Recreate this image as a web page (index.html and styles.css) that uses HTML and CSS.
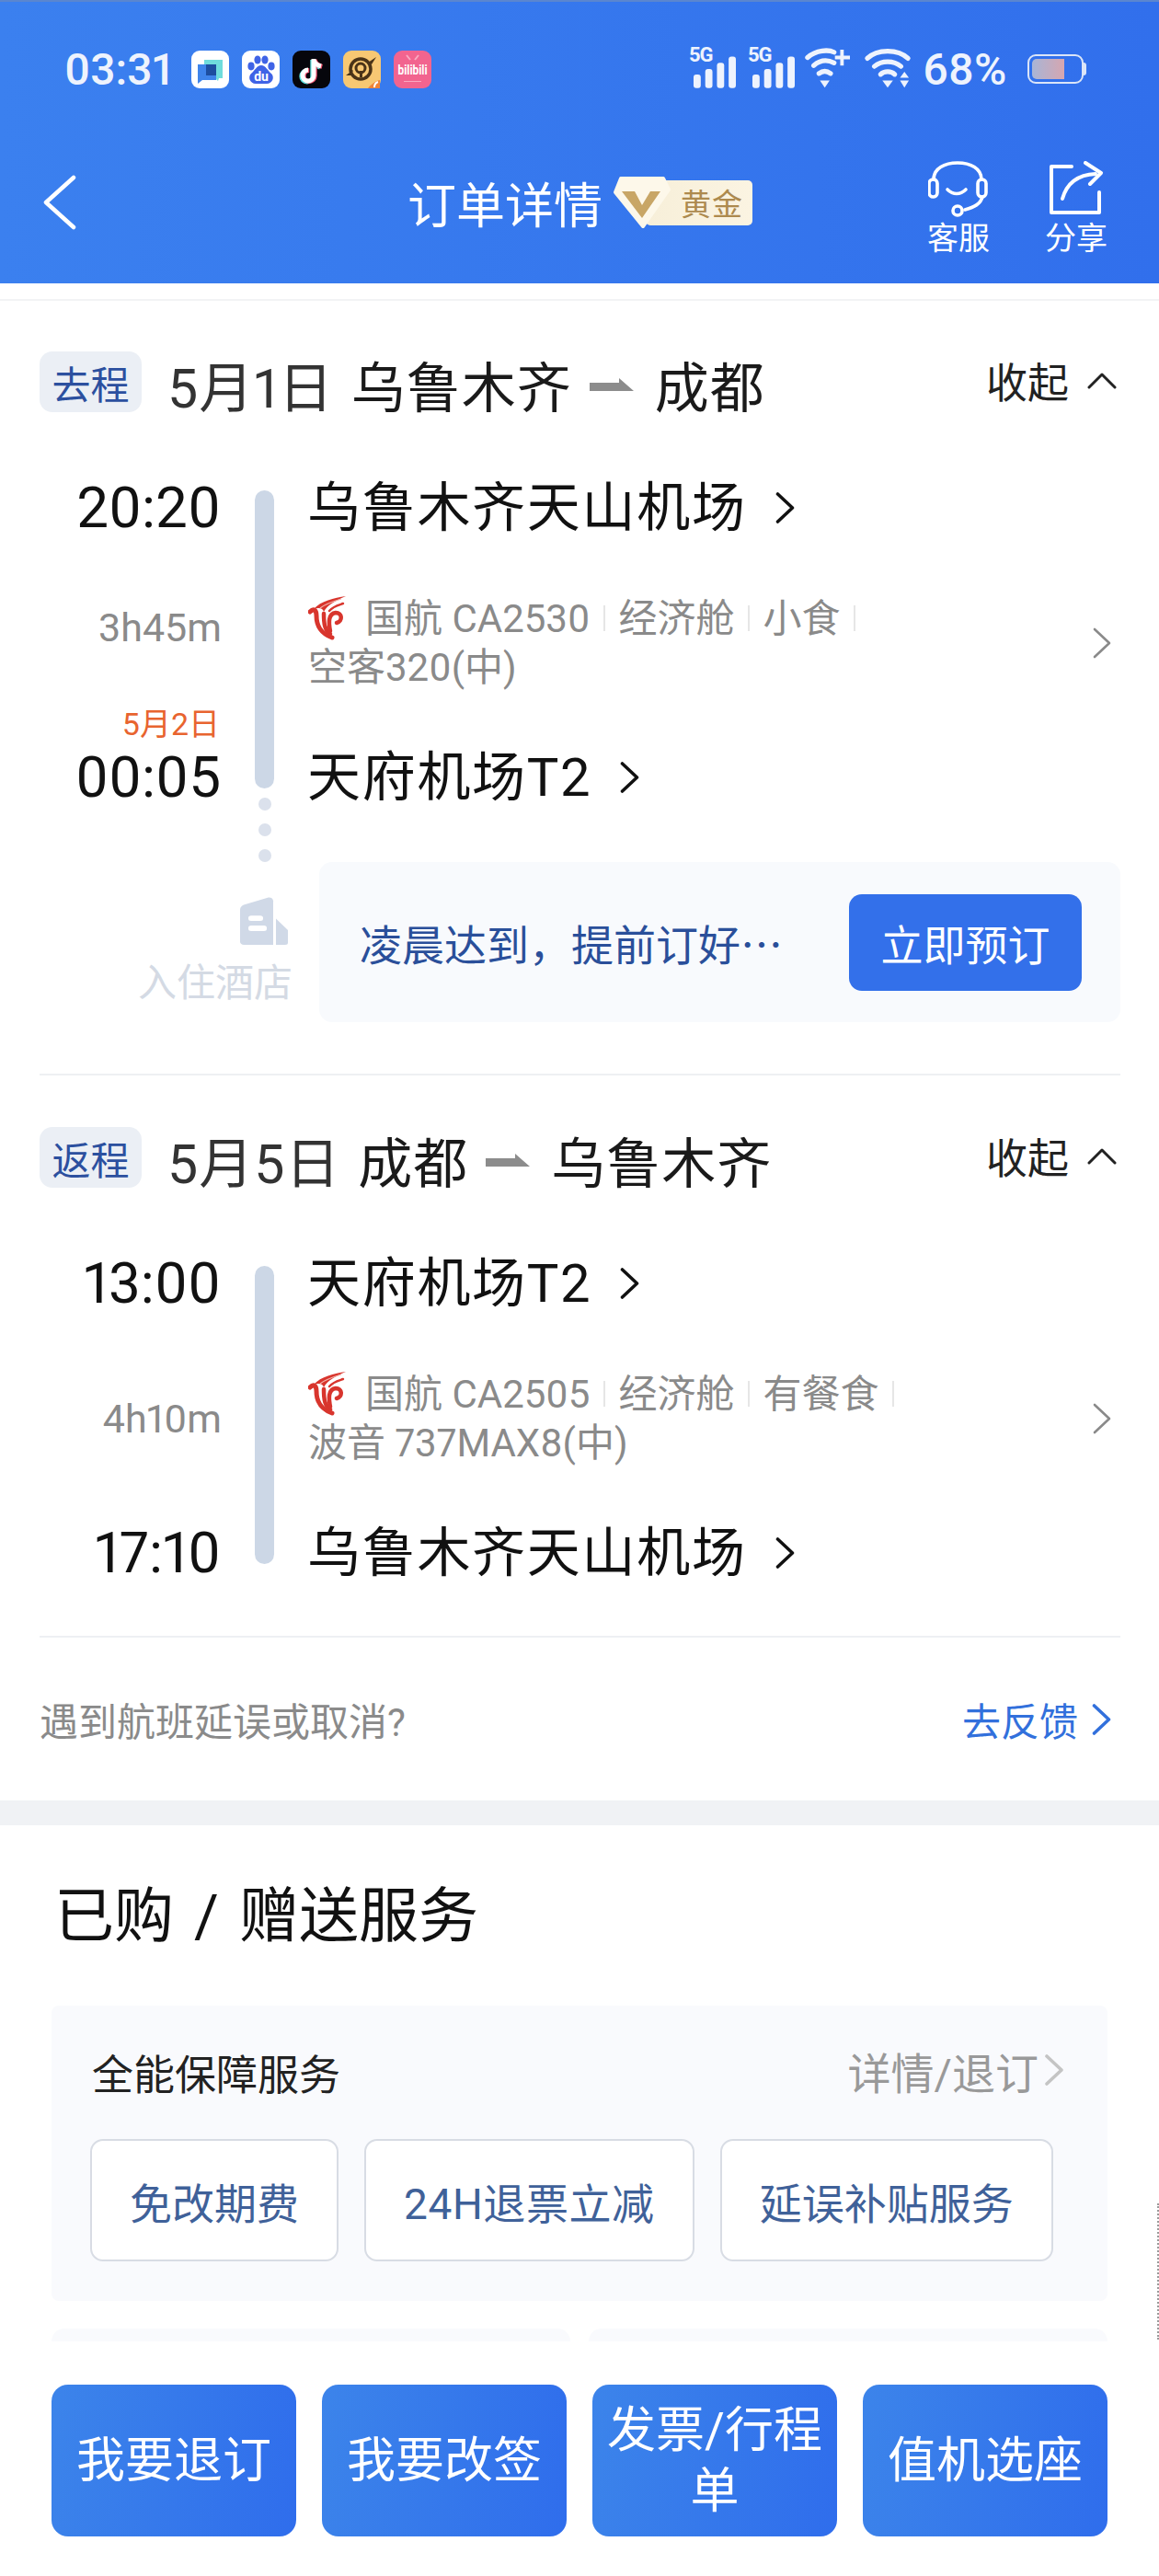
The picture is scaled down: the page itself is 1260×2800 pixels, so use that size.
FILE: index.html
```html
<!doctype html>
<html lang="zh-CN">

<head>
  <meta charset="UTF-8" />
  <meta name="viewport" content="width=device-width, initial-scale=1.0" />
  <title>订单详情</title>
  <link rel="stylesheet" href="styles.css">
</head>

<body>
  <svg class="defs" aria-hidden="true">
    <symbol id="chev" viewBox="0 0 20 34">
      <polyline points="2,2 18,17 2,32" fill="none" stroke="currentColor" stroke-width="3.6" stroke-linecap="round" stroke-linejoin="round" />
    </symbol>
    <symbol id="chev-thin" viewBox="0 0 20 34">
      <polyline points="2,2 18,17 2,32" fill="none" stroke="currentColor" stroke-width="2.6" stroke-linecap="round" stroke-linejoin="round" />
    </symbol>
    <symbol id="chev-up" viewBox="0 0 32 18">
      <polyline points="2,16 16,2 30,16" fill="none" stroke="currentColor" stroke-width="3" stroke-linecap="round" stroke-linejoin="round" />
    </symbol>
    <symbol id="air-china" viewBox="0 0 42 48">
      <path d="M41 0C28 2 14 5 6 14c6-2 10-1 11 3C21 9 30 5 41 0z" fill="#d8352d" />
      <path d="M36 3C26 6 18 9 13 13" fill="none" stroke="#f3b3aa" stroke-width="1.2" />
      <g fill="none" stroke="#d8352d" stroke-linecap="round">
        <path d="M2 17c4-4 7-2 7 4 0 11 4 19 17 24" stroke-width="5" />
        <path d="M17 19c0 11 1 18 7 22" stroke-width="4.500" />
        <path d="M24 38c-2-10-2-19 6-20 7 0 8 9 1 11" stroke-width="4.500" />
        <path d="M23 16c4-5 9-6 15-8" stroke-width="2.400" />
      </g>
    </symbol>
    <symbol id="route-arrow" viewBox="0 0 48 14">
      <polygon points="0,5 32,5 32,0 48,14 0,14" fill="#8c8c8c" />
    </symbol>
    <symbol id="signal" viewBox="0 0 48 36">
      <g fill="#eef3fd">
        <rect x="1" y="20" width="8" height="15" rx="3" />
        <rect x="14" y="14" width="8" height="21" rx="3" />
        <rect x="27" y="7" width="8" height="28" rx="3" />
        <rect x="40" y="0" width="8" height="35" rx="3" />
      </g>
    </symbol>
  </svg>

  <header class="top">
    <div class="status-bar">
      <span class="clock">03:31</span>
      <div class="app-icons">
        <svg class="app-icon" viewBox="0 0 41 41">
          <rect width="41" height="41" rx="9" fill="#fff" />
          <path d="M14 10h20v20h-4l-1 3-3-3H14z" fill="#6fdcdc" />
          <path d="M7 15h20v17H12l-5 4z" fill="#3f84ea" />
          <rect x="16" y="15" width="11" height="12" fill="#1d4e9f" />
        </svg>
        <svg class="app-icon" viewBox="0 0 41 41">
          <rect width="41" height="41" rx="9" fill="#fff" />
          <g fill="#3f63e6">
            <ellipse cx="10" cy="17" rx="3.6" ry="4.4" />
            <ellipse cx="17" cy="10" rx="3.6" ry="4.6" />
            <ellipse cx="25" cy="10" rx="3.6" ry="4.6" />
            <ellipse cx="32" cy="17" rx="3.6" ry="4.4" />
            <path d="M21 16c5 0 7 6 11 9 4 4 1 11-5 11H15c-6 0-9-7-5-11 4-3 6-9 11-9z" />
          </g>
          <text class="du" x="21" y="33">du</text>
        </svg>
        <svg class="app-icon" viewBox="0 0 41 41">
          <rect width="41" height="41" rx="9" fill="#06060c" />
          <g fill="none" stroke-width="5">
            <path d="M23 9v18a6 6 0 1 1-6-6M23 10c1 4 4 6 8 7" stroke="#5fe3e0" transform="translate(-1.2 1)" />
            <path d="M23 9v18a6 6 0 1 1-6-6M23 10c1 4 4 6 8 7" stroke="#f0506e" transform="translate(1.2 .4)" />
            <path d="M23 9v18a6 6 0 1 1-6-6M23 10c1 4 4 6 8 7" stroke="#fff" />
          </g>
        </svg>
        <svg class="app-icon" viewBox="0 0 41 41">
          <rect width="41" height="41" rx="9" fill="#f7c873" />
          <circle cx="19" cy="20" r="11" fill="none" stroke="#4a3418" stroke-width="3.5" />
          <circle cx="19" cy="19" r="5" fill="none" stroke="#4a3418" stroke-width="3" />
          <path d="M18 22h3v7h-3zM3 27 11 21 9 27zM36 7 27 13 31 15z" fill="#4a3418" />
          <path d="M27 41c3-4 8-8 13-9v9z" fill="#f08438" />
          <path d="M34 40c0-3 1-5 4-6" fill="none" stroke="#fff" stroke-width="2" />
        </svg>
        <svg class="app-icon" viewBox="0 0 41 41">
          <rect width="41" height="41" rx="9" fill="#f2648f" />
          <path d="M14 5l4 5M27 5l-4 5" stroke="#f9a9c1" stroke-width="2" />
          <text class="bili" x="20.5" y="26" textLength="32" lengthAdjust="spacingAndGlyphs">bilibili</text>
          <rect x="11" y="33" width="19" height="1" fill="#f9a9c1" />
        </svg>
      </div>
      <div class="status-right">
        <div class="sim"><span class="sim-type">5G</span><svg class="sim-bars"><use href="#signal" /></svg></div>
        <div class="sim sim--last"><span class="sim-type">5G</span><svg class="sim-bars"><use href="#signal" /></svg></div>
        <svg class="wifi-icon" viewBox="0 0 50 50">
          <g fill="none" stroke="#eef3fd" stroke-width="5.5" stroke-linecap="round">
            <path d="M2 12C12 3 26 3 32 6" />
            <path d="M9 21c7-6 15-7 23-3" />
            <path d="M15 30c4-3 9-3 13 0" />
          </g>
          <path d="M16 38h11l-5.500 8z" fill="#eef3fd" />
          <path d="M41 3v18M33 12h17" stroke="#eef3fd" stroke-width="4" />
        </svg>
        <svg class="wifi-icon wifi-icon--main" viewBox="0 0 52 50">
          <g fill="none" stroke="#eef3fd" stroke-width="5.5" stroke-linecap="round">
            <path d="M3 13C14 2 38 2 49 13" />
            <path d="M11 22c8-7 22-7 30 0" />
            <path d="M18 31c4-4 12-4 16 0" />
          </g>
          <path d="M20 38h12l-6 8z" fill="#eef3fd" />
          <path d="M40 35h10l-5-7zM40 38h10l-5 8z" fill="#eef3fd" />
        </svg>
        <span class="battery-text">68%</span>
        <div class="battery"><div class="battery-level"></div></div>
      </div>
    </div>

    <nav class="nav">
      <svg class="back" viewBox="0 0 36 60">
        <polyline points="33,3 3,30 33,57" fill="none" stroke="#fff" stroke-width="4.500" stroke-linecap="round" stroke-linejoin="round" />
      </svg>
      <h1 class="page-title">订单详情</h1>
      <div class="member">
        <svg class="member-gem" viewBox="0 0 64 58">
          <polygon points="9,3 55,3 61,15 33,55 3,18" fill="#fdf8ea" stroke="#fdf8ea" stroke-width="4" stroke-linejoin="round" />
          <polygon points="10,17 24,17 32,32 41,17 52,17 32,46" fill="#c8a666" />
        </svg>
        <span class="member-name">黄金</span>
      </div>
      <div class="nav-actions">
        <a class="nav-action" href="#">
          <svg class="nav-icon" viewBox="0 0 66 62">
            <g fill="none" stroke="#fff" stroke-width="3.600" stroke-linecap="round">
              <path d="M6 20C6 8 18 2 32 2s26 6 26 18" />
              <rect x="1" y="20" width="9" height="19" rx="4.500" />
              <rect x="54" y="20" width="9" height="19" rx="4.500" />
              <path d="M21 31c6 6 14 6 20 0" />
              <path d="M59 39c-2 8-9 11-19 14" />
              <circle cx="32" cy="54" r="5" />
            </g>
          </svg>
          <span>客服</span>
        </a>
        <a class="nav-action" href="#">
          <svg class="nav-icon" viewBox="0 0 66 62">
            <g fill="none" stroke="#fff" stroke-width="4" stroke-linecap="round" stroke-linejoin="round">
              <path d="M28 6H6v50h52V34" />
              <path d="M18 41c4-14 14-26 36-27" />
              <path d="M43 2l17 11-12 12" />
            </g>
          </svg>
          <span>分享</span>
        </a>
      </div>
    </nav>
  </header>

  <main class="main">
    <div class="top-line"></div>

    <section class="trip trip--first">
      <div class="trip-head">
        <span class="trip-tag">去程</span>
        <div class="trip-route">
          <span class="trip-date">5月1日</span>
          <span>乌鲁木齐</span>
          <svg class="route-arrow"><use href="#route-arrow" /></svg>
          <span>成都</span>
        </div>
        <a class="fold" href="#">收起<svg class="fold-icon"><use href="#chev-up" /></svg></a>
      </div>

      <div class="flight">
        <div class="time">20:20</div>
        <div class="rail"></div>
        <div class="place">乌鲁木齐天山机场<svg class="place-chev"><use href="#chev" /></svg></div>

        <div class="span-info span-info--nextday">
          <span class="duration">3h45m</span>
          <span class="next-day">5月2日</span>
        </div>
        <div class="info">
          <div class="info-text">
            <div class="info-line">
              <svg class="airline-logo"><use href="#air-china" /></svg>
              <span>国航 CA2530</span><i class="sep"></i><span>经济舱</span><i class="sep"></i><span>小食</span><i class="sep"></i>
            </div>
            <div class="info-line">空客320(中)</div>
          </div>
          <svg class="info-chev"><use href="#chev-thin" /></svg>
        </div>

        <div class="time">00:05</div>
        <div class="place">天府机场T2<svg class="place-chev"><use href="#chev" /></svg></div>

        <div class="stay-dots"><i></i><i></i><i></i></div>
        <div class="stay-label">
          <svg class="hotel-icon" viewBox="0 0 52 62" preserveAspectRatio="none">
            <path d="M0 16C0 13 2 11 4 10L30 1c3-1 6 1 6 4v57H4c-2 0-4-2-4-4z" fill="#d0d9e7" />
            <path d="M39 28l13 15v16c0 2-1 3-3 3H39z" fill="#d0d9e7" />
            <rect x="9" y="24" width="16" height="7" rx="3" fill="#fff" />
            <rect x="9" y="37" width="20" height="7" rx="3" fill="#fff" />
          </svg>
          <span>入住酒店</span>
        </div>
        <div class="stay-box">
          <span class="stay-text">凌晨达到，提前订好…</span>
          <button class="stay-btn" type="button">立即预订</button>
        </div>
      </div>
    </section>

    <section class="trip">
      <div class="trip-head">
        <span class="trip-tag">返程</span>
        <div class="trip-route">
          <span class="trip-date">5月5日</span>
          <span>成都</span>
          <svg class="route-arrow"><use href="#route-arrow" /></svg>
          <span>乌鲁木齐</span>
        </div>
        <a class="fold" href="#">收起<svg class="fold-icon"><use href="#chev-up" /></svg></a>
      </div>

      <div class="flight">
        <div class="time">13:00</div>
        <div class="rail"></div>
        <div class="place">天府机场T2<svg class="place-chev"><use href="#chev" /></svg></div>

        <div class="span-info">
          <span class="duration">4h10m</span>
        </div>
        <div class="info">
          <div class="info-text">
            <div class="info-line">
              <svg class="airline-logo"><use href="#air-china" /></svg>
              <span>国航 CA2505</span><i class="sep"></i><span>经济舱</span><i class="sep"></i><span>有餐食</span><i class="sep"></i>
            </div>
            <div class="info-line">波音 737MAX8(中)</div>
          </div>
          <svg class="info-chev"><use href="#chev-thin" /></svg>
        </div>

        <div class="time">17:10</div>
        <div class="place">乌鲁木齐天山机场<svg class="place-chev"><use href="#chev" /></svg></div>
      </div>

      <div class="feedback">
        <span>遇到航班延误或取消?</span>
        <a class="feedback-link" href="#">去反馈<svg class="feedback-chev"><use href="#chev" /></svg></a>
      </div>
    </section>

    <div class="band"></div>

    <section class="services">
      <h2 class="services-title">已购 / 赠送服务</h2>
      <div class="panel">
        <div class="panel-head">
          <span>全能保障服务</span>
          <a class="panel-more" href="#">详情/退订<svg class="panel-chev"><use href="#chev" /></svg></a>
        </div>
        <div class="pills">
          <span class="pill">免改期费</span>
          <span class="pill pill--wide">24H退票立减</span>
          <span class="pill">延误补贴服务</span>
        </div>
      </div>
      <div class="panel-row">
        <div class="panel-small"></div>
        <div class="panel-small"></div>
      </div>
    </section>
  </main>

  <footer class="actions">
    <button class="action-btn" type="button">我要退订</button>
    <button class="action-btn" type="button">我要改签</button>
    <button class="action-btn" type="button">发票/行程单</button>
    <button class="action-btn" type="button">值机选座</button>
  </footer>

  <div class="scroll-mark"></div>
</body>

</html>
```

FILE: styles.css
```css
* {
  box-sizing: border-box;
}

html,
body {
  margin: 0;
  padding: 0;
  width: 1260px;
  height: 2800px;
  background-color: white;
  color: #1a1a1a;
  font-family: Roboto, 'Noto Sans CJK SC', sans-serif;
  font-variant-numeric: proportional-nums;
}

body {
  position: relative;
  display: flex;
  flex-direction: column;
  overflow: hidden;
}

a {
  color: inherit;
  text-decoration: none;
}

svg {
  display: block;
}

.defs {
  position: absolute;
  width: 0;
  height: 0;
}

/* header */

.top {
  flex: none;
  height: 308px;
  border-top: 2px solid #5a86cf;
  background: linear-gradient(90deg, #3b80ef, #316fec);
  color: white;
}

.status-bar {
  display: flex;
  align-items: center;
  height: 146px;
  padding: 0 82px 0 70px;
}

.clock {
  width: 138px;
  font-size: 48px;
  font-weight: 500;
  color: #eef3fd;
}

.app-icons {
  display: flex;
  gap: 14px;
}

.app-icon {
  width: 41px;
  height: 41px;
}

.du {
  font-family: Roboto, sans-serif;
  font-size: 14px;
  font-weight: 700;
  fill: #fff;
  text-anchor: middle;
}

.bili {
  font-family: Roboto, sans-serif;
  font-size: 14px;
  font-weight: 700;
  fill: #fff;
  text-anchor: middle;
}

.status-right {
  display: flex;
  align-items: center;
  margin-left: auto;
}

.sim {
  position: relative;
  width: 51px;
  height: 44px;
  margin-right: 13px;
}

.sim--last {
  margin-right: 9px;
}

.sim-type {
  position: absolute;
  top: -6px;
  left: -2px;
  font-size: 22px;
  font-weight: 700;
  letter-spacing: -1px;
  color: #eef3fd;
}

.sim-bars {
  position: absolute;
  right: 2px;
  bottom: 0;
  width: 47px;
  height: 36px;
}

.wifi-icon {
  width: 50px;
  height: 48px;
  margin-right: 14px;
}

.wifi-icon--main {
  width: 52px;
  margin-right: 12px;
}

.battery-text {
  width: 114px;
  font-size: 48px;
  font-weight: 500;
  color: #eef3fd;
}

.battery {
  position: relative;
  width: 61px;
  height: 32px;
  padding: 3px;
  border: 2px solid #dbe5f8;
  border-radius: 9px;
}

.battery::after {
  content: "";
  position: absolute;
  top: 7px;
  right: -5px;
  width: 3px;
  height: 14px;
  border-radius: 0 3px 3px 0;
  background-color: #dbe5f8;
}

.battery-level {
  width: 68%;
  height: 100%;
  border-radius: 5px 0 0 5px;
  background: linear-gradient(90deg, #a8b5d6, #d6a6b0);
}

.nav {
  display: flex;
  align-items: center;
  height: 106px;
  margin-top: 27px;
  padding: 0 50px 0 47px;
}

.back {
  width: 36px;
  height: 60px;
  margin-top: -16px;
}

.page-title {
  margin: -16px 0 0 360px;
  font-size: 53px;
  font-weight: 400;
  white-space: nowrap;
}

.member {
  position: relative;
  display: flex;
  align-items: center;
  justify-content: flex-end;
  width: 116px;
  height: 49px;
  margin: -16px 0 0 47px;
  padding-right: 10px;
  border-radius: 5px;
  background: linear-gradient(90deg, #f7efd9, #fbf4e2);
  color: #ad8a4e;
  font-size: 33px;
}

.member-gem {
  position: absolute;
  top: -5px;
  left: -36px;
  width: 64px;
  height: 58px;
}

.member-name {
  letter-spacing: 1px;
}

.nav-actions {
  display: flex;
  gap: 48px;
  margin-left: auto;
}

.nav-action {
  display: flex;
  flex-direction: column;
  align-items: center;
  width: 80px;
  font-size: 34px;
  line-height: 44px;
}

.nav-icon {
  width: 66px;
  height: 62px;
}

/* trips */

.main {
  flex: 1;
  min-height: 0;
  overflow: hidden;
}

.top-line {
  height: 2px;
  margin-top: 17px;
  background-color: #f2f3f5;
}

.trip {
  padding: 56px 42px 0 43px;
}

.trip--first {
  padding-top: 55px;
}

.trip--first::after {
  content: "";
  display: block;
  height: 2px;
  margin-top: 56px;
  background-color: #eef0f3;
}

.trip-head {
  display: flex;
  align-items: center;
  height: 66px;
}

.trip-tag {
  display: flex;
  align-items: center;
  justify-content: center;
  width: 111px;
  height: 66px;
  border-radius: 14px;
  background-color: #ebeff5;
  color: #2c509f;
  font-size: 42px;
}

.trip-route {
  display: flex;
  align-items: center;
  gap: 19px;
  margin: 5px 0 0 28px;
  font-size: 59px;
  letter-spacing: 1px;
  color: #1a1a1a;
}

.trip-date {
  color: #333;
}

.route-arrow {
  width: 48px;
  height: 14px;
  margin-right: 4px;
}

.fold {
  display: flex;
  align-items: center;
  margin: -3px 0 0 auto;
  padding-right: 4px;
  font-size: 45px;
  color: #222;
}

.fold-icon {
  width: 32px;
  height: 18px;
  margin-left: 20px;
}

.flight {
  display: grid;
  grid-template-columns: 197px 21px 1fr;
  grid-template-rows: 64px 229px 64px auto;
  column-gap: 37px;
  margin-top: 72px;
}

.time {
  text-align: right;
  font-size: 62px;
  line-height: 64px;
  color: #111;
}

.rail {
  grid-column: 2;
  grid-row: 1 / 4;
  margin: 13px 0 20px;
  border-radius: 11px;
  background-color: #ccd7e6;
}

.place {
  display: flex;
  align-items: center;
  margin-left: -1px;
  font-size: 58px;
  line-height: 64px;
  letter-spacing: 1.700px;
  color: #111;
}

.place-chev {
  width: 21px;
  height: 34px;
  margin-left: 31px;
}

.span-info {
  display: flex;
  flex-direction: column;
  align-items: flex-end;
  justify-content: center;
}

.span-info--nextday {
  justify-content: flex-start;
  padding-top: 72px;
}

.duration {
  margin-right: -1px;
  font-size: 43px;
  line-height: 52px;
  color: #8a8a8a;
}

.next-day {
  margin-top: 57px;
  margin-right: 1px;
  font-size: 34px;
  line-height: 44px;
  color: #e8642f;
}

.info {
  display: flex;
  align-items: center;
  justify-content: space-between;
  grid-column: 3;
  padding-right: 10px;
}

.info-text {
  font-size: 42px;
  line-height: 53px;
  color: #8a8a8a;
}

.info-line {
  display: flex;
  align-items: center;
}

.airline-logo {
  width: 42px;
  height: 48px;
  margin-right: 20px;
}

.sep {
  width: 2px;
  height: 28px;
  margin: 0 14px 0 15px;
  background-color: #e6e6e6;
}

.info-chev {
  width: 20px;
  height: 34px;
  color: #8a8a8a;
}

.stay-dots {
  display: flex;
  flex-direction: column;
  gap: 14px;
  grid-column: 2;
  grid-row: 4;
  align-items: center;
  margin-top: -10px;
}

.stay-dots i {
  width: 14px;
  height: 14px;
  border-radius: 50%;
  background-color: #dbe1ec;
}

.stay-label {
  display: flex;
  flex-direction: column;
  align-items: flex-end;
  grid-column: 1 / 3;
  grid-row: 4;
  align-self: end;
  margin: 0 -20px 14px 0;
  font-size: 42px;
  line-height: 56px;
  color: #d4dae4;
}

.hotel-icon {
  width: 52px;
  height: 52px;
  margin: 0 5px 14px 0;
}

.stay-box {
  display: flex;
  align-items: center;
  justify-content: space-between;
  grid-column: 3;
  grid-row: 4;
  height: 174px;
  margin: 60px 0 0 12px;
  padding: 0 42px 0 44px;
  border-radius: 14px;
  background-color: #f8fafd;
}

.stay-text {
  font-family: 'Noto Sans CJK SC', sans-serif;
  font-size: 46px;
  color: #2a4f9a;
}

.stay-btn {
  width: 253px;
  height: 105px;
  border: none;
  border-radius: 14px;
  background-color: #3370ea;
  color: white;
  font-family: inherit;
  font-size: 46px;
}

.feedback {
  display: flex;
  align-items: center;
  justify-content: space-between;
  height: 179px;
  margin-top: 58px;
  padding: 0 10px 0 0;
  border-top: 2px solid #eef0f3;
  font-size: 42px;
  color: #8a8a8a;
}

.feedback-link {
  display: flex;
  align-items: center;
  color: #3270dc;
}

.feedback-chev {
  width: 21px;
  height: 34px;
  margin-left: 15px;
}

.band {
  height: 27px;
  background-color: #f0f2f5;
}

/* services */

.services {
  padding: 0 56px;
}

.services-title {
  display: flex;
  align-items: center;
  height: 196px;
  margin: 0;
  padding: 0 0 10px 3px;
  font-size: 65px;
  font-weight: 400;
  word-spacing: 6px;
  color: #111;
}

.panel {
  height: 321px;
  padding: 41px 48px 0 44px;
  border-radius: 8px;
  background-color: #f9fafd;
}

.panel-head {
  display: flex;
  align-items: center;
  justify-content: space-between;
  height: 62px;
  font-size: 45px;
  color: #222;
}

.panel-more {
  display: flex;
  align-items: center;
  margin-top: -4px;
  font-size: 47px;
  color: #999;
}

.panel-chev {
  width: 20px;
  height: 34px;
  margin-left: 7px;
  color: #c4c4c4;
}

.pills {
  display: flex;
  gap: 28px;
  margin: 42px 0 0 -2px;
}

.pill {
  display: flex;
  align-items: center;
  height: 133px;
  padding: 0 41px;
  border: 2px solid #d8dce4;
  border-radius: 14px;
  background-color: white;
  color: #3f6199;
  font-size: 46px;
}

.pill--wide {
  letter-spacing: 0.600px;
}

.panel-row {
  display: flex;
  gap: 20px;
  margin-top: 30px;
}

.panel-small {
  flex: 1;
  height: 100px;
  border-radius: 14px;
  background-color: #f9fafd;
}

/* bottom bar */

.actions {
  flex: none;
  display: grid;
  grid-template-columns: repeat(4, 266px);
  gap: 28px;
  height: 255px;
  padding: 47px 56px 43px;
  background-color: white;
}

.action-btn {
  padding: 0 12px;
  border: none;
  border-radius: 18px;
  background: linear-gradient(100deg, #3c84ea, #2f6dec);
  color: white;
  font-family: inherit;
  font-size: 53px;
  line-height: 66px;
}

.scroll-mark {
  position: absolute;
  top: 2395px;
  right: 0;
  width: 2px;
  height: 148px;
  border-right: 2px dotted #9a9a9a;
}
```
